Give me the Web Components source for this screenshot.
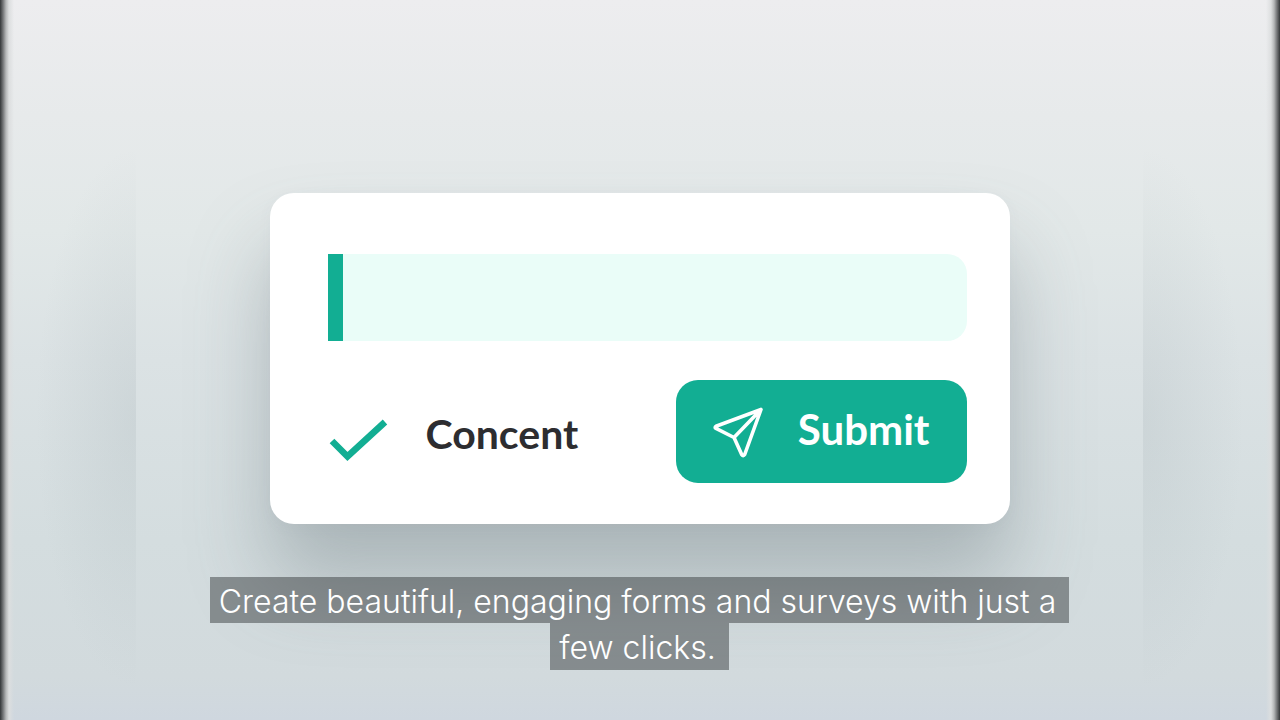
<!DOCTYPE html>
<html lang="en">
<head>
<meta charset="utf-8">
<meta name="viewport" content="width=device-width, initial-scale=1">
<title>Form preview</title>
<style>
body { margin: 0; font-family: Lato, "Liberation Sans", sans-serif; color: #2d2d30; }
</style>
</head>
<body>
<promo-stage>
  <form-card>
    <text-field label="Your answer"></text-field>
    <consent-check slot="actions">Concent</consent-check>
    <submit-button slot="actions">Submit</submit-button>
  </form-card>
  <video-caption slot="caption">
    <span>Create beautiful, engaging forms and surveys with just a</span>
    <span>few clicks.</span>
  </video-caption>
</promo-stage>
<script>
const define = (name, html, setup) => {
  const template = document.createElement('template');
  template.innerHTML = html;
  customElements.define(name, class extends HTMLElement {
    constructor() {
      super();
      this.attachShadow({ mode: 'open' }).append(template.content.cloneNode(true));
    }
    connectedCallback() { if (setup) setup(this); }
  });
};

define('promo-stage', `
<style>
  :host { display: grid; grid-template-columns: 136fr 1007fr 137fr; min-height: 100vh;
    background: linear-gradient(#ededef, #e7eaeb 16%, #e2e8e8 32%, #dbe2e4 50%, #d4dddf 75%, #d2dadd 94%, #cfd7df); }
  .side { background:
    linear-gradient(var(--edge), #333638, #737577 3px, #b5b7b8 6px, #dcdedf 9px, transparent 14px),
    radial-gradient(ellipse 100px 270px at var(--near) 58%, rgb(150 163 168 / 18%), transparent); }
  .left { --edge: to right; --near: 100%; }
  .right { --edge: to left; --near: 0%; }
  main { display: flex; flex-direction: column; align-items: center; justify-content: flex-end;
    gap: 53px; padding: 48px 0 50px; box-sizing: border-box; overflow: hidden; }
</style>
<div class="side left"></div>
<main><slot></slot><slot name="caption"></slot></main>
<div class="side right"></div>`);

define('form-card', `
<style>
  :host { display: block; box-sizing: border-box; width: 90%; max-width: 740px;
    padding: 61px 43px 41px 58px; border-radius: 24px; background: #fff;
    box-shadow: 0 56px 80px rgb(98 110 116 / 36%), 0 4px 16px rgb(98 110 116 / 4%); }
  .actions { display: flex; flex-wrap: wrap; align-items: center; justify-content: space-between;
    gap: 20px; margin-top: 39px; }
</style>
<slot></slot>
<div class="actions"><slot name="actions"></slot></div>`);

define('text-field', `
<style>
  :host { display: block; }
  input { display: block; box-sizing: border-box; width: 100%; height: 87px; margin: 0;
    padding: 0 24px; border: 0; border-left: 15px solid #12ae93; border-radius: 0 20px 20px 0;
    background: #eafdf8; font: 32px Lato, sans-serif; color: inherit; outline: 0; }
</style>
<input type="text">`, el => {
  el.shadowRoot.querySelector('input').setAttribute('aria-label', el.getAttribute('label'));
});

define('consent-check', `
<style>
  :host { display: block; }
  label { display: flex; align-items: center; gap: 38px;
    font: bold 41px/48px Lato, sans-serif; cursor: pointer; }
  .box { display: grid; width: 60px; height: 60px; }
  .text { padding-top: 4px; }
  input, svg { grid-area: 1 / 1; width: 60px; height: 60px; margin: 0; }
  input { appearance: none; }
  svg { pointer-events: none; visibility: hidden; }
  input:checked + svg { visibility: visible; }
</style>
<label><span class="box"><input type="checkbox" checked>
<svg viewBox="0 0 60 60" aria-hidden="true"><path d="M4 39 19.500 54.500 57 20" fill="none" stroke="#12ae93" stroke-width="6.6"/></svg>
</span><span class="text"><slot></slot></span></label>`);

define('submit-button', `
<style>
  :host { display: block; }
  button { display: flex; align-items: center; gap: 33px; height: 103px; padding: 0 37px;
    border: 0; border-radius: 22px; background: #12ae93; color: #fff;
    font: bold 42px/48px Lato, sans-serif; cursor: pointer; }
  svg { width: 52px; height: 52px; flex: none; }
  .text { padding-bottom: 6px; }
</style>
<button type="button">
<svg viewBox="0 0 52 52" fill="none" stroke="#fff" stroke-width="3.6" stroke-linejoin="round" stroke-linecap="round" aria-hidden="true"><path d="M48 3.500 3 20.300Q1.300 21.400 3 22.400L21 31.500 28.800 48.700Q30.200 50.600 31.700 48.500ZM48 3.500 21 31.500"/></svg>
<span class="text"><slot></slot></span></button>`);

define('video-caption', `
<style>
  :host { display: flex; flex-direction: column; align-items: center; color: #fff;
    font: 300 32px/43px Inter, "Open Sans", sans-serif; }
  ::slotted(span) { padding: 3px 13px 0 9px; background: rgb(50 54 56 / 48%); }
  ::slotted(span:last-child) { padding-bottom: 1px; }
</style>
<slot></slot>`);
</script>
</body>
</html>
